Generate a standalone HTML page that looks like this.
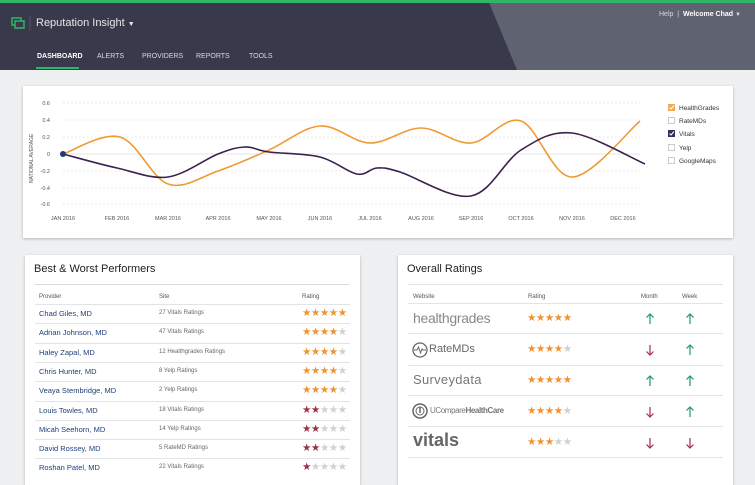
<!DOCTYPE html>
<html><head><meta charset="utf-8"><style>
*{margin:0;padding:0;box-sizing:border-box}
body{width:755px;height:471px;overflow:hidden;background:#eef0f2;font-family:"Liberation Sans",sans-serif;position:relative}
.hdr{position:absolute;left:0;top:0;width:755px;height:70px;background:#383a4b;overflow:hidden}
.abs{position:absolute}
.card{position:absolute;background:#fff;box-shadow:0 1px 3px rgba(0,0,0,.25)}
.t{position:absolute;white-space:nowrap}
.nav{font-size:7px;color:#d8d9de;top:53px}
.row{position:absolute;left:10px;right:10px;border-top:1px solid #e3e4e7}
.stars{position:absolute;font-size:10.5px;letter-spacing:-0.5px;white-space:nowrap}
.o{color:#f0922e}.r{color:#9c3044}.g{color:#d0d0d0}
</style></head><body>
<div class="hdr">
<svg class="abs" style="left:0;top:0" width="755" height="70"><polygon points="488,0 755,0 755,70 517,70" fill="#5f6271"/><rect x="0" y="0" width="755" height="3" fill="#2fb565"/><rect x="36" y="67" width="43" height="2" fill="#2fb565"/>
<rect x="12" y="18" width="9" height="7" fill="none" stroke="#33b36a" stroke-width="1.5"/><rect x="15" y="21" width="9" height="7" fill="#383a4b" stroke="#33b36a" stroke-width="1.5"/>
<line x1="30" y1="16" x2="30" y2="31" stroke="#55576a"/></svg>
<div class="t" style="left:36px;top:17px;font-size:11px;color:#e6e7ea">Reputation Insight <span style="font-size:7px">▼</span></div>
<div class="t nav" style="left:37px;color:#fff;font-weight:bold">DASHBOARD</div>
<div class="t nav" style="left:97px">ALERTS</div>
<div class="t nav" style="left:142px">PROVIDERS</div>
<div class="t nav" style="left:196px">REPORTS</div>
<div class="t nav" style="left:249px">TOOLS</div>
<div class="t" style="left:659px;top:11px;font-size:7px;color:#d8d9de">Help &nbsp;| &nbsp;<b style="color:#fff">Welcome Chad</b> <span style="font-size:6px">▼</span></div>
</div>

<div class="card" style="left:23px;top:86px;width:710px;height:152px"></div>
<svg class="abs" style="left:0;top:0" width="755" height="471" font-family="Liberation Sans" font-size="5.5" fill="#555">
<g stroke="#ddd" stroke-dasharray="1.5,2.5" stroke-width="0.8">
<line x1="63" x2="640" y1="103" y2="103"/><line x1="63" x2="640" y1="120" y2="120"/><line x1="63" x2="640" y1="137" y2="137"/><line x1="63" x2="640" y1="171" y2="171"/><line x1="63" x2="640" y1="188" y2="188"/><line x1="63" x2="640" y1="204" y2="204"/></g>
<line x1="63" x2="640" y1="154" y2="154" stroke="#ddd" stroke-width="0.8"/>
<g text-anchor="end"><text x="50" y="105">0.6</text><text x="50" y="122">0.4</text><text x="50" y="139">0.2</text><text x="50" y="156">0</text><text x="50" y="173">-0.2</text><text x="50" y="190">-0.4</text><text x="50" y="206">-0.6</text></g>
<text transform="translate(33,183) rotate(-90)" font-size="5">NATIONAL AVERAGE</text>
<g text-anchor="middle" id="mx"></g>
<path id="po" fill="none" stroke="#ef9a32" stroke-width="1.6"/>
<path id="pp" fill="none" stroke="#3a2150" stroke-width="1.6"/>
<circle cx="63" cy="154" r="3" fill="#1c3b7a"/>
<g font-size="6.5" fill="#333">
<rect x="668" y="104" width="7" height="7" fill="#f0a955"/><text x="679" y="110">HealthGrades</text>
<rect x="668.5" y="117.5" width="6" height="6" fill="#fff" stroke="#ccc"/><text x="679" y="123">RateMDs</text>
<rect x="668" y="130" width="7" height="7" fill="#3a2a5a"/><text x="679" y="136">Vitals</text>
<rect x="668.5" y="144.5" width="6" height="6" fill="#fff" stroke="#ccc"/><text x="679" y="150">Yelp</text>
<rect x="668.5" y="157.5" width="6" height="6" fill="#fff" stroke="#ccc"/><text x="679" y="163">GoogleMaps</text>
<path d="M669.5 107.5l1.5 1.5 3-3.5M669.5 133.5l1.5 1.5 3-3.5" stroke="#fff" fill="none" stroke-width="1"/></g>
</svg>

<div class="card" style="left:25px;top:255px;width:335px;height:230px">
<div class="t" style="left:9px;top:8px;font-size:11px;color:#222">Best &amp; Worst Performers</div>
<div class="row" style="top:29px;border-top:1px solid #dcdde0"></div>
<div class="t" style="left:14px;top:39px;font-size:6px;color:#555">Provider</div>
<div class="t" style="left:134px;top:39px;font-size:6px;color:#555">Site</div>
<div class="t" style="left:277px;top:39px;font-size:6px;color:#555">Rating</div>
<div id="lrows"></div>
</div>

<div class="card" style="left:398px;top:255px;width:335px;height:230px">
<div class="t" style="left:9px;top:8px;font-size:11px;color:#222">Overall Ratings</div>
<div class="row" style="top:29px"></div>
<div class="t" style="left:15px;top:39px;font-size:6px;color:#555">Website</div>
<div class="t" style="left:130px;top:39px;font-size:6px;color:#555">Rating</div>
<div class="t" style="left:243px;top:39px;font-size:6px;color:#555">Month</div>
<div class="t" style="left:284px;top:39px;font-size:6px;color:#555">Week</div>
<div class="row" style="top:48px"></div>
<div class="t" style="left:15px;top:55px;font-size:14px;color:#888;letter-spacing:-0.3px">healthgrades</div>
<div class="row" style="top:78px"></div>
<svg class="abs" style="left:14px;top:87px" width="16" height="16"><circle cx="8" cy="8" r="7" fill="none" stroke="#666" stroke-width="1.3"/><path d="M2 8h3l1.5-3 2 6 1.5-4 1 1h3" stroke="#666" fill="none"/></svg>
<div class="t" style="left:31px;top:88px;font-size:11px;color:#666">RateMDs</div>
<div class="row" style="top:110px"></div>
<div class="t" style="left:15px;top:117px;font-size:13px;color:#777;letter-spacing:0.3px">Surveydata</div>
<div class="row" style="top:140px"></div>
<svg class="abs" style="left:14px;top:148px" width="16" height="16"><circle cx="8" cy="8" r="7" fill="none" stroke="#666" stroke-width="1.5"/><circle cx="8" cy="8" r="4" fill="none" stroke="#666"/><line x1="8" y1="4" x2="8" y2="10" stroke="#666" stroke-width="1.5"/></svg>
<div class="t" style="left:32px;top:151px;font-size:8px;color:#777;letter-spacing:-0.4px">UCompare<b>HealthCare</b></div>
<div class="row" style="top:171px"></div>
<div class="t" style="left:15px;top:175px;font-size:18px;font-weight:bold;color:#666">vitals</div>
<div class="row" style="top:202px"></div>
<div id="rrows"></div>
</div>

<script>
var mx=[63,117,168,218,269,320,370,421,471,521,572,623],nm=["JAN","FEB","MAR","APR","MAY","JUN","JUL","AUG","SEP","OCT","NOV","DEC"];
var g=document.getElementById('mx'),s='';
nm.forEach(function(n,i){s+='<text x="'+mx[i]+'" y="220">'+n+' 2016</text>'});g.innerHTML=s;
function path(pts){var d='M'+pts[0][0]+' '+pts[0][1];for(var i=0;i<pts.length-1;i++){var p0=pts[i-1]||pts[i],p1=pts[i],p2=pts[i+1],p3=pts[i+2]||p2,k=6;
d+=' C'+(p1[0]+(p2[0]-p0[0])/k)+' '+(p1[1]+(p2[1]-p0[1])/k)+' '+(p2[0]-(p3[0]-p1[0])/k)+' '+(p2[1]-(p3[1]-p1[1])/k)+' '+p2[0]+' '+p2[1];}return d;}
var o=[[63,154],[120,137],[168,184],[218,171],[269,150],[320,126],[370,143],[421,128],[471,143],[521,121],[572,177],[640,121]];
var p=[[63,154],[117,168],[168,177],[218,154],[245,147],[269,152],[320,157],[357,174],[377,168],[400,172],[471,196],[521,150],[572,133],[645,164]];
document.getElementById('po').setAttribute('d',path(o));
document.getElementById('pp').setAttribute('d',path(p));
var L=[["Chad Giles, MD","27 Vitals Ratings",5,'o'],["Adrian Johnson, MD","47 Vitals Ratings",4,'o'],["Haley Zapal, MD","12 Healthgrades Ratings",4,'o'],["Chris Hunter, MD","8 Yelp Ratings",4,'o'],["Veaya Stembridge, MD","2 Yelp Ratings",4,'o'],["Louis Towles, MD","18 Vitals Ratings",2,'r'],["Micah Seehorn, MD","14 Yelp Ratings",2,'r'],["David Rossey, MD","5 RateMD Ratings",2,'r'],["Roshan Patel, MD","22 Vitals Ratings",1,'r']];
function st(n,c){var h='';for(var i=0;i<5;i++)h+='<span class="'+(i<n?c:'g')+'">★</span>';return h;}
h='';L.forEach(function(r,i){var y=49+i*19.3;h+='<div class="row" style="top:'+y+'px"></div><div class="t" style="left:14px;top:'+(y+5)+'px;font-size:7.5px;color:#1f3f7a">'+r[0]+'</div><div class="t" style="left:134px;top:'+(y+6)+'px;font-size:6px;color:#666">'+r[1]+'</div><div class="stars" style="left:277px;top:'+(y+3)+'px">'+st(r[2],r[3])+'</div>';});
document.getElementById('lrows').innerHTML=h;
function ar(up,x,y){var c=up?'#1e9a6a':'#a0304a';var d=up?'M5 1V11M1.5 4.5L5 1 8.5 4.5':'M5 11V1M1.5 7.5L5 11 8.5 7.5';return '<svg class="abs" style="left:'+x+'px;top:'+y+'px" width="10" height="12"><path d="'+d+'" stroke="'+c+'" stroke-width="1.2" fill="none"/></svg>';}
var R=[[5,1,1],[4,0,1],[5,1,1],[4,0,1],[3,0,0]],ys=[57,88,119,150,181];h='';
R.forEach(function(r,i){h+='<div class="stars" style="left:129px;top:'+ys[i]+'px">'+st(r[0],'o')+'</div>'+ar(r[1],247,ys[i]+1)+ar(r[2],287,ys[i]+1);});
document.getElementById('rrows').innerHTML=h;
</script>
</body></html>
